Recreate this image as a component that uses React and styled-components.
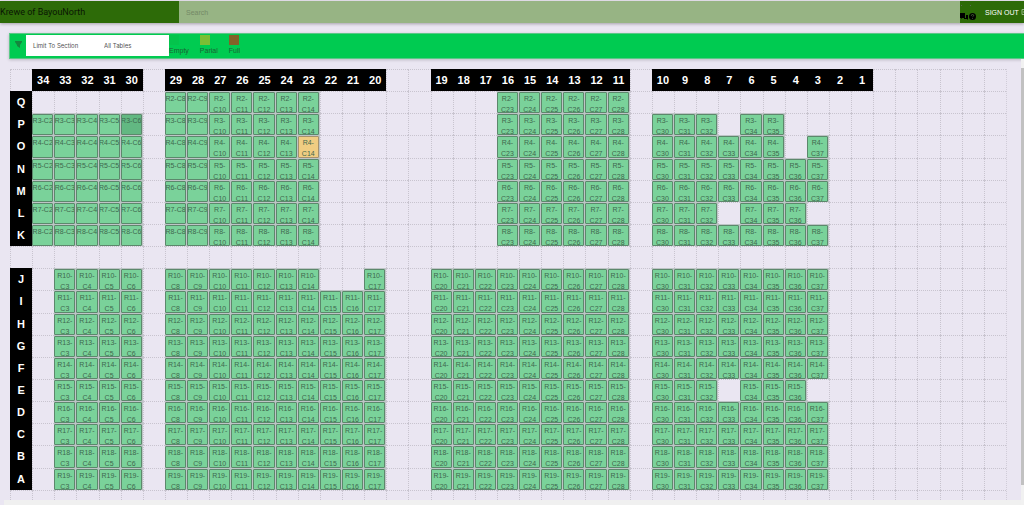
import styled, { createGlobalStyle } from 'styled-components'

const GlobalStyle = createGlobalStyle`
    * {
        box-sizing: border-box;
    }

    body {
        margin: 0;
        background-color: rgb(234, 230, 242);
        font-family: "Liberation Sans", Arial, sans-serif;
        overflow: hidden;
    }
`;

const Page = styled.div`
    height: 100vh;
    display: flex;
    flex-direction: column;
`;

const TopBar = styled.header`
    display: flex;
    height: 22px;
    margin-top: 1px;
    flex-shrink: 0;
    background-color: rgb(45, 107, 8);
    box-shadow: 0 1px 3px rgba(0, 0, 0, 0.3);
`;

const Brand = styled.div`
    width: 179px;
    font-family: Roboto, sans-serif;
    font-size: 9px;
    line-height: 22px;
    color: rgb(10, 22, 4);
    white-space: nowrap;
`;

const SearchInput = styled.input`
    flex: 1;
    min-width: 0;
    border: none;
    padding: 0 7px;
    background-color: rgb(151, 180, 132);
    font-family: inherit;
    font-size: 7px;

    &::placeholder {
        color: rgb(116, 137, 102);
    }
`;

const Account = styled.div`
    width: 64px;
    display: flex;
    align-items: center;
    gap: 7px;
    overflow: hidden;
`;

const HelpIcons = styled.svg`
    width: 18px;
    height: 22px;
    flex-shrink: 0;
`;

const SignOut = styled.button`
    display: flex;
    align-items: center;
    gap: 2px;
    border: none;
    padding: 0;
    background-color: transparent;
    color: white;
    font-family: inherit;
    font-size: 7px;
    white-space: nowrap;
    cursor: pointer;
`;

const Toolbar = styled.div`
    display: flex;
    height: 26px;
    margin: 10px 0 0 9px;
    flex-shrink: 0;
    background-color: rgb(0, 203, 81);
    border: 1px solid rgb(90, 200, 135);
    border-right: none;
    box-shadow: 0 1px 3px rgba(0, 0, 0, 0.2);
`;

const FilterIcon = styled.svg`
    width: 16px;
    height: 7px;
    margin-top: 7px;
    fill: rgb(20, 135, 62);
`;

const FilterBox = styled.div`
    display: flex;
    align-items: center;
    width: 143px;
    height: 21px;
    margin-top: 1px;
    padding-left: 7px;
    background-color: white;
    color: rgb(80, 80, 80);
    font-family: Inter, sans-serif;
    font-size: 6px;
`;

const FilterLabel = styled.label`
    width: 71px;
`;

const FilterSelect = styled.select`
    appearance: none;
    border: none;
    padding: 0;
    background-color: transparent;
    color: inherit;
    font-family: inherit;
    font-size: inherit;
`;

const Legend = styled.div`
    display: flex;
    gap: 11px;
    padding-top: 1px;
`;

const LegendItem = styled.div`
    font-size: 7px;
    line-height: 12px;
    color: rgb(28, 98, 52);
`;

const Swatch = styled.div`
    width: 10px;
    height: 10px;
    background-color: ${props => props.$color};
`;

const Viewport = styled.main`
    position: relative;
    flex: 1;
    min-height: 0;
    display: flex;
    flex-direction: column;
`;

const ChartArea = styled.div`
    flex: 1;
    min-height: 0;
    overflow: hidden;
    padding: 10px 17px 0 10px;
`;

const SeatGrid = styled.div`
    display: grid;
    grid-template-columns: repeat(45, 1fr);
    border-right: 1px dotted rgb(208, 204, 216);
`;

const Cell = styled.div`
    min-width: 0;
    aspect-ratio: 1;
    border-left: 1px dotted rgb(200, 196, 207);
    border-top: 1px dotted rgb(200, 196, 207);
`;

const SeatCell = styled.div`
    min-width: 0;
    aspect-ratio: 1;
    padding: 1px 1px 0 0;
    background-color: rgb(190, 196, 198);
`;

const HeaderCell = styled.div`
    min-width: 0;
    aspect-ratio: 1;
    display: flex;
    align-items: center;
    justify-content: center;
    background-color: black;
    color: white;
    font-size: 11px;
    font-weight: bold;
`;

const seatColors = {
    empty: 'rgb(122, 210, 154)',
    active: 'rgb(98, 184, 130)',
    partial: 'rgb(240, 205, 130)',
};

const Seat = styled.button`
    display: block;
    width: 100%;
    height: 100%;
    overflow: hidden;
    border: 1px solid ${props => props.$status === 'partial' ? 'rgb(165, 145, 110)' : 'rgb(92, 136, 108)'};
    border-radius: 1px;
    padding: 0;
    background-color: ${props => seatColors[props.$status]};
    color: rgb(62, 104, 78);
    font-family: inherit;
    font-size: 7px;
    cursor: pointer;
`;

const SeatLabel = styled.span`
    display: flex;
    justify-content: center;
    height: 100%;
    line-height: 11px;
    white-space: ${props => props.$short ? 'nowrap' : 'normal'};
`;

const VerticalScroll = styled.div`
    position: absolute;
    top: 0;
    right: 0;
    bottom: 0;
    width: 3px;
    padding: 9px 0 20px;
    background-color: rgb(241, 241, 241);
`;

const HorizontalScroll = styled.div`
    height: 5px;
    margin-left: 4px;
    flex-shrink: 0;
    background-color: rgb(240, 240, 240);
`;

const ScrollThumb = styled.div`
    height: 100%;
    background-color: rgb(193, 193, 193);
`;

const COLUMNS = 45;
const ROWS = 20;
const rowLetters = 'QPONMLK JIHGFEDCBA';

const range = (from, to) => Array.from({ length: to - from + 1 }, (_, i) => from + i);

// last block on the right has a few missing tables
const rightBlock = {
    2: [],
    3: [30, 31, 32, 34, 35],
    4: [30, 31, 32, 33, 34, 35, 37],
    7: [30, 31, 32, 34, 35, 36],
    15: [30, 31, 32, 34, 35, 36],
};

const seatsInRow = (row) => {
    if (row < 2 || row === 9 || row > 19) return [];
    const right = rightBlock[row] || range(30, 37);
    if (row < 9) {
        return [...(row > 2 ? range(2, 6) : []), ...range(8, 14), ...range(23, 28), ...right];
    }
    const middle = row === 10 ? [...range(8, 14), 17] : range(8, 17);
    return [...range(3, 6), ...middle, ...range(20, 28), ...right];
}

const columnNumber = (col) => {
    if (col >= 2 && col <= 6) return 36 - col;
    if (col >= 8 && col <= 17) return 37 - col;
    if (col >= 20 && col <= 28) return 39 - col;
    if (col >= 30 && col <= 39) return 40 - col;
    return null;
}

const seatStatus = (row, col) => {
    if (row === 3 && col === 6) return 'active';
    if (row === 4 && col === 14) return 'partial';
    return 'empty';
}

const GridCell = ({ row, col, taken }) => {
    if (row === 1 && columnNumber(col)) {
        return <HeaderCell>{columnNumber(col)}</HeaderCell>;
    }
    if (col === 1 && row > 1 && row < 20 && row !== 9) {
        return <HeaderCell>{rowLetters[row - 2]}</HeaderCell>;
    }
    if (!taken) return <Cell />;
    return (
        <SeatCell>
            <Seat $status={seatStatus(row, col)}>
                <SeatLabel $short={row < 10 && col < 10}>{`R${row}-C${col}`}</SeatLabel>
            </Seat>
        </SeatCell>
    );
}

const App = () => {
    return (
        <Page>
            <GlobalStyle />
            <TopBar>
                <Brand>Krewe of BayouNorth</Brand>
                <SearchInput type="search" placeholder="Search" aria-label="Search" />
                <Account>
                    <HelpIcons viewBox="0 0 18 22">
                        <path d="M0 12h5v5H2l-1 1v-1H0z" fill="black" />
                        <path d="M6 14h2v5l-1-1H4v-1h2z" fill="black" />
                        <circle cx="12.5" cy="15.5" r="3.5" fill="black" />
                        <path d="M11.3 14.8q0-1.3 1.2-1.3t1.2 1.1q0 .6-1.2 1.2M12.5 17v.8" fill="none" stroke="rgb(90, 125, 70)" strokeWidth="0.7" />
                        <path d="M1 4.5h1M10 4.5h1" stroke="rgb(90, 110, 80)" />
                    </HelpIcons>
                    <SignOut>
                        SIGN OUT
                        <svg width="4" height="6" viewBox="0 0 4 6">
                            <path d="M4 .5H1v5h3M2 3h2" fill="none" stroke="rgb(150, 185, 135)" />
                        </svg>
                    </SignOut>
                </Account>
            </TopBar>
            <Toolbar>
                <FilterIcon viewBox="0 0 16 7">
                    <path d="M5 0h7v1L10 4v3L7 5V4L5 1z" />
                </FilterIcon>
                <FilterBox>
                    <FilterLabel htmlFor="section">Limit To Section</FilterLabel>
                    <FilterSelect id="section">
                        <option>All Tables</option>
                    </FilterSelect>
                </FilterBox>
                <Legend>
                    <LegendItem><Swatch $color="rgb(4, 196, 76)" />Empty</LegendItem>
                    <LegendItem><Swatch $color="rgb(124, 190, 52)" />Parial</LegendItem>
                    <LegendItem><Swatch $color="rgb(130, 98, 40)" />Full</LegendItem>
                </Legend>
            </Toolbar>
            <Viewport>
                <ChartArea>
                    <SeatGrid>
                        {range(1, ROWS).map(row => {
                            const seats = seatsInRow(row);
                            return range(1, COLUMNS).map(col => (
                                <GridCell key={`${row}-${col}`} row={row} col={col} taken={seats.includes(col)} />
                            ));
                        })}
                    </SeatGrid>
                </ChartArea>
                <HorizontalScroll />
                <VerticalScroll><ScrollThumb /></VerticalScroll>
            </Viewport>
        </Page>
    );
}

export default App;
